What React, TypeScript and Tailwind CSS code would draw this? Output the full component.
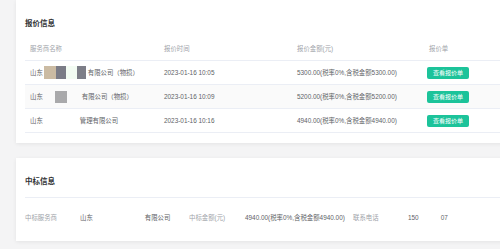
import React from 'react';

interface QuoteRow {
  head: string;
  blocks: React.ReactNode;
  tail: string;
  time: string;
  amount: string;
}

const rows: QuoteRow[] = [
  {
    head: '山东',
    blocks: (
      <span className="flex items-center">
        <span className="ml-[1px] h-[13px] w-[12px] bg-[#cbbba3]" />
        <span className="h-[13px] w-[10px] bg-[#7b7c87]" />
        <span className="h-[13px] w-[11px] bg-[#f3fcf3]" />
        <span className="h-[13px] w-[9px] bg-[#7d7e88] blur-[0.5px]" />
        <span className="w-[2px]" />
      </span>
    ),
    tail: '有限公司（物损）',
    time: '2023-01-16 10:05',
    amount: '5300.00(税率0%,含税金额5300.00)',
  },
  {
    head: '山东',
    blocks: (
      <span className="flex items-center">
        <span className="ml-[12px] h-[12px] w-[12px] bg-[#a9a9ab]" />
        <span className="w-[15px]" />
      </span>
    ),
    tail: '有限公司（物损）',
    time: '2023-01-16 10:09',
    amount: '5200.00(税率0%,含税金额5200.00)',
  },
  {
    head: '山东',
    blocks: <span className="w-[37px]" />,
    tail: '管理有限公司',
    time: '2023-01-16 10:16',
    amount: '4940.00(税率0%,含税金额4940.00)',
  },
];

const cols = 'grid grid-cols-[134px_133px_132px_1fr]';

export default function App() {
  return (
    <div
      className="h-[249px] w-[500px] overflow-hidden bg-[#f4f4f5]"
      style={{ fontFamily: '"Liberation Sans", "Noto Sans CJK SC", sans-serif' }}
    >
      <div className="flex flex-col gap-[15px] pl-4">
        {/* 报价信息 */}
        <div className="h-[143px] w-[560px] bg-white px-[9px] pt-[18px] shadow-[0_1px_4px_rgba(0,0,0,0.07)]">
          <div className="h-[12px] text-[7.5px] font-bold leading-[12px] text-[#303133]">报价信息</div>
          <div className="mt-[7px] text-[6.4px] leading-[12px]">
            <div className={`${cols} h-[24px] items-center border-b border-[#ebeef5] pl-[5px] text-[#a0a3a9]`}>
              <span>服务商名称</span>
              <span>报价时间</span>
              <span>报价金额(元)</span>
              <span>报价单</span>
            </div>
            {rows.map((r, i) => (
              <div
                key={r.time}
                className={`${cols} h-[24px] items-center border-b border-[#ebeef5] pl-[5px] text-[#606266] ${
                  i === 1 ? 'bg-[#fafafa]' : ''
                }`}
              >
                <span className="flex items-center">
                  <span>{r.head}</span>
                  {r.blocks}
                  <span>{r.tail}</span>
                </span>
                <span>{r.time}</span>
                <span>{r.amount}</span>
                <span>
                  <button
                    type="button"
                    className="-ml-[2px] h-[12px] w-[42px] rounded-[2px] bg-[#1cc39a] text-[6px] leading-[12px] text-white"
                  >
                    查看报价单
                  </button>
                </span>
              </div>
            ))}
          </div>
        </div>

        {/* 中标信息 */}
        <div className="h-[83px] w-[560px] bg-white px-[9px] pt-[18px] shadow-[0_1px_4px_rgba(0,0,0,0.07)]">
          <div className="h-[12px] text-[7.5px] font-bold leading-[12px] text-[#303133]">中标信息</div>
          <div className="mt-[9px] border-t border-[#ebeef5]" />
          <div className="grid grid-cols-[55px_109px_56px_108px_55px_1fr] pt-[14px] text-[6.4px] leading-[12px]">
            <span className="text-[#a0a3a9]">中标服务商</span>
            <span className="flex text-[#606266]">
              <span>山东</span>
              <span className="w-[52px]" />
              <span>有限公司</span>
            </span>
            <span className="text-[#a0a3a9]">中标金额(元)</span>
            <span className="text-[#606266]">4940.00(税率0%,含税金额4940.00)</span>
            <span className="text-[#a0a3a9]">联系电话</span>
            <span className="flex text-[#606266]">
              <span>150</span>
              <span className="w-[22px]" />
              <span>07</span>
            </span>
          </div>
        </div>
      </div>
    </div>
  );
}
